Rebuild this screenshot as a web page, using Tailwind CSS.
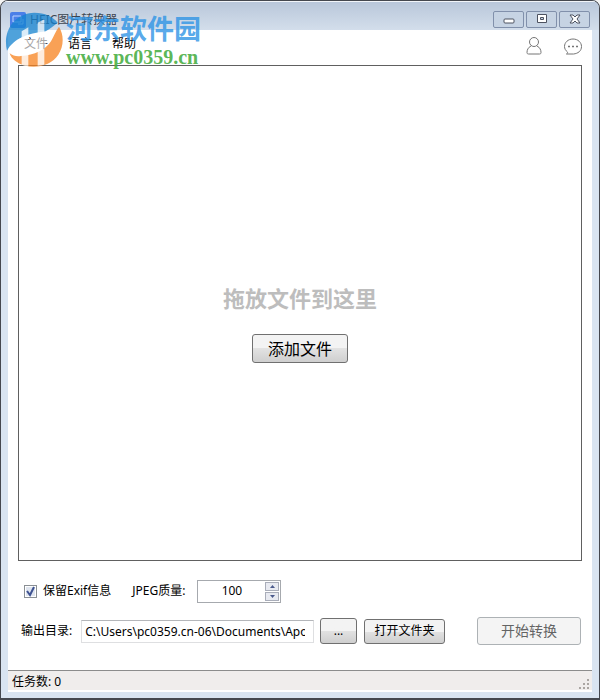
<!DOCTYPE html>
<html lang="zh-CN">
<head>
    <meta charset="UTF-8">
    <meta name="viewport" content="width=device-width, initial-scale=1.0">
    <title>HEIC图片转换器</title>
    <script src="https://cdn.jsdelivr.net/npm/@tailwindcss/browser@4"></script>
</head>
<body class="bg-[#f4f4f4] font-['Noto_Sans','Noto_Sans_CJK_SC',sans-serif] text-xs text-black antialiased">
    <!-- 窗口 -->
    <div class="relative flex min-h-screen flex-col overflow-hidden rounded-t-lg border border-b-2 border-[#45484f] bg-[#d9e4f1] px-[7px] pb-[6px]">

        <!-- 标题栏 -->
        <header class="-mx-[7px] flex h-[29px] shrink-0 items-center justify-between border-t border-white/70 bg-linear-to-b from-[#b9c7da] to-[#d3deeb] pr-[9px] pl-[9px]">
            <div class="flex items-center gap-1 pt-2">
                <svg class="size-4" viewBox="0 0 16 16" fill="none">
                    <rect width="16" height="16" rx="2" fill="#4b7fe8"/>
                    <path d="M3 4h8v6H3zM8 12h5V7" stroke="#bcd6ff"/>
                </svg>
                <h1 class="text-[#3d4651]">HEIC图片转换器</h1>
            </div>
            <div class="flex gap-[2px] pt-[6px]">
                <button type="button" aria-label="最小化" class="flex h-[17px] w-[31px] items-center justify-center rounded-xs border border-[#8190ab] bg-[#c6d3e3]">
                    <svg class="h-3 w-3" viewBox="0 0 12 12"><rect x="1" y="6" width="10" height="4" rx="1" fill="#fff" stroke="#4d5260"/></svg>
                </button>
                <button type="button" aria-label="最大化" class="flex h-[17px] w-[31px] items-center justify-center rounded-xs border border-[#8190ab] bg-[#c6d3e3]">
                    <svg class="h-3 w-3" viewBox="0 0 12 12"><path d="M1.500 1.500h9v8h-9z" fill="#fff" stroke="#4d5260"/><path d="M4.500 4.500h3v2h-3z" fill="#c6d3e3" stroke="#4d5260"/></svg>
                </button>
                <button type="button" aria-label="关闭" class="flex h-[17px] w-[31px] items-center justify-center rounded-xs border border-[#8190ab] bg-[#c6d3e3]">
                    <svg class="h-3 w-3" viewBox="0 0 12 12"><path d="M1 2h3l2 2 2-2h3L8 6l3 4H8L6 8l-2 2H1l3-4z" fill="#fff" stroke="#4d5260"/></svg>
                </button>
            </div>
        </header>

        <div class="flex grow flex-col bg-white">
            <!-- 菜单栏 -->
            <nav class="flex h-[35px] shrink-0 items-center justify-between pr-[9px] pl-4">
                <div class="flex gap-5 pb-[7px]">
                    <a href="#" class="text-[#1f2326]">文件</a>
                    <a href="#">语言</a>
                    <a href="#">帮助</a>
                </div>
                <div class="flex gap-5 pb-1 text-[#757575]">
                    <a href="#" aria-label="用户">
                        <svg class="h-[18px] w-[18px]" viewBox="0 0 18 18" fill="none" stroke="currentColor">
                            <circle cx="9" cy="5" r="4.500"/>
                            <path d="M6 9C3 10.500 2 13 2 15.500c0 1 .5 1.500 1.500 1.500h11c1 0 1.500-.5 1.500-1.500C16 13 15 10.500 12 9"/>
                        </svg>
                    </a>
                    <a href="#" aria-label="反馈">
                        <svg class="h-[18px] w-[20px]" viewBox="0 0 20 18" fill="none" stroke="currentColor">
                            <path d="M4.500 15C2.500 13.500 1.500 11.500 1.500 9.500c0-4 3.500-7.500 8.500-7.500s8.500 3.500 8.500 7.500c0 4.500-3.500 7-8 7.500H3.500c1-.6 1.200-1.200 1-2z"/>
                            <path d="M5 9.500h2M9 9.500h2M13 9.500h2" stroke-width="1.500"/>
                        </svg>
                    </a>
                </div>
            </nav>

            <!-- 文件拖放区 -->
            <main class="mx-[10px] flex min-h-[200px] grow flex-col items-center justify-center gap-5 border border-[#606060] pt-[19px]">
                <p class="text-[22px] leading-8 font-bold text-[#bdbdbd]">拖放文件到这里</p>
                <button type="button" class="h-[29px] w-24 rounded-[3px] border border-[#707070] bg-linear-to-b from-[#f3f3f3] from-50% via-[#e2e2e2] via-50% to-[#cfcfcf] text-base leading-none">添加文件</button>
            </main>

            <!-- 转换选项 -->
            <form class="flex h-[109px] shrink-0 flex-col gap-[14px] pt-[18px] pr-[11px] pl-[13px]" onsubmit="return false">
                <div class="flex h-6 items-center pl-[3px]">
                    <label class="flex items-center gap-[6px]">
                        <span class="relative flex size-[13px]">
                            <input type="checkbox" checked class="peer size-[13px] appearance-none border border-[#8a8f94] bg-[#dfe5ef] shadow-[inset_0_0_0_1px_white]">
                            <svg class="pointer-events-none absolute inset-0 hidden peer-checked:block" viewBox="0 0 13 13" fill="none"><path d="M3 6l3 4 4-8" stroke="#3e5291" stroke-width="2"/></svg>
                        </span>
                        保留Exif信息
                    </label>
                    <label for="quality" class="ml-[21px]">JPEG质量:</label>
                    <div class="ml-3 flex h-[23px] w-[84px] items-center border border-[#a6a9ae] pr-px">
                        <input id="quality" type="text" inputmode="numeric" value="100" class="w-0 grow text-center outline-none">
                        <div class="flex flex-col gap-px">
                            <button type="button" aria-label="增加" class="flex h-[9px] w-[14px] items-center justify-center border border-[#a9adb9] bg-[#e8eaf1]"><svg class="h-[3px] w-[5px]" viewBox="0 0 5 3"><path d="M0 3L2.500 0 5 3z" fill="#4b5a8c"/></svg></button>
                            <button type="button" aria-label="减少" class="flex h-[9px] w-[14px] items-center justify-center border border-[#a9adb9] bg-[#e8eaf1]"><svg class="h-[3px] w-[5px]" viewBox="0 0 5 3"><path d="M0 0l2.500 3L5 0z" fill="#4b5a8c"/></svg></button>
                        </div>
                    </div>
                </div>
                <div class="flex h-7 items-center">
                    <label for="output" class="shrink-0">输出目录:</label>
                    <input id="output" type="text" value="C:\Users\pc0359.cn-06\Documents\Apowersoft" class="ml-[9px] h-[23px] w-0 grow border border-[#dedfe1] border-t-[#b4b6ba] pr-2 pl-[3px] outline-none">
                    <button type="button" class="ml-[6px] h-[26px] w-[37px] rounded-[3px] border border-[#707070] bg-linear-to-b from-[#f3f3f3] from-50% via-[#e2e2e2] via-50% to-[#cfcfcf]">...</button>
                    <button type="button" class="ml-[7px] h-[25px] w-[81px] rounded-[3px] border border-[#707070] bg-linear-to-b from-[#f3f3f3] from-50% via-[#e2e2e2] via-50% to-[#cfcfcf]">打开文件夹</button>
                    <button type="submit" disabled class="ml-8 h-7 w-[104px] rounded-[3px] border border-[#adb2b5] bg-[#f4f4f4] text-sm leading-none text-[#646464]">开始转换</button>
                </div>
            </form>

            <!-- 状态栏 -->
            <footer class="flex h-[22px] shrink-0 items-center justify-between border-t border-b-2 border-t-[#8c8c8c] border-b-white bg-[#f0edec] pt-[3px] pr-[2px] pl-1">
                <span>任务数: 0</span>
                <svg class="h-3 w-3 self-end" viewBox="0 0 12 12" fill="#aaa5a2">
                    <path d="M9 1h2v2H9zM5 5h2v2H5zM9 5h2v2H9zM1 9h2v2H1zM5 9h2v2H5zM9 9h2v2H9z"/>
                </svg>
            </footer>
        </div>

        <!-- 水印 -->
        <div class="pointer-events-none absolute top-[9px] left-1 flex">
            <svg class="h-[58px] w-[60px] opacity-75" viewBox="0 0 180 174">
                <path d="M6 122C-8 66 26 10 88 8c32 0 56 12 70 30-10 8-22 18-36 26-28 4-52 8-70 18C32 90 16 104 6 122z" fill="#1583d0"/>
                <path d="M162 50c16 26 14 60-2 84-26 40-92 48-130 18-8-6-14-14-16-22 10 8 22 10 34 8 40-2 74-18 90-44 8-14 14-30 24-44z" fill="#f7821e"/>
                <path d="M50 64l20-12v38c8-4 18-6 28-8V38l20-10v52c10-4 18-12 26-20-2 20-12 34-26 44v60l-20 4v-54c-8 4-18 6-28 8v50l-20-8v-40c-8 2-18 0-26-4 4-16 14-30 26-38z" fill="#fff" fill-opacity=".8"/>
            </svg>
            <div class="ml-[1px] flex flex-col pt-[2px]">
                <span class="font-['Noto_Sans_CJK_SC',sans-serif] text-[27px] leading-8 font-bold text-[#2c93e5]/80">河东软件园</span>
                <span class="pt-[3px] font-['Liberation_Serif',serif] text-xl leading-5 font-bold text-[#46ad42]/90">www.pc0359.cn</span>
            </div>
        </div>
    </div>
</body>
</html>
